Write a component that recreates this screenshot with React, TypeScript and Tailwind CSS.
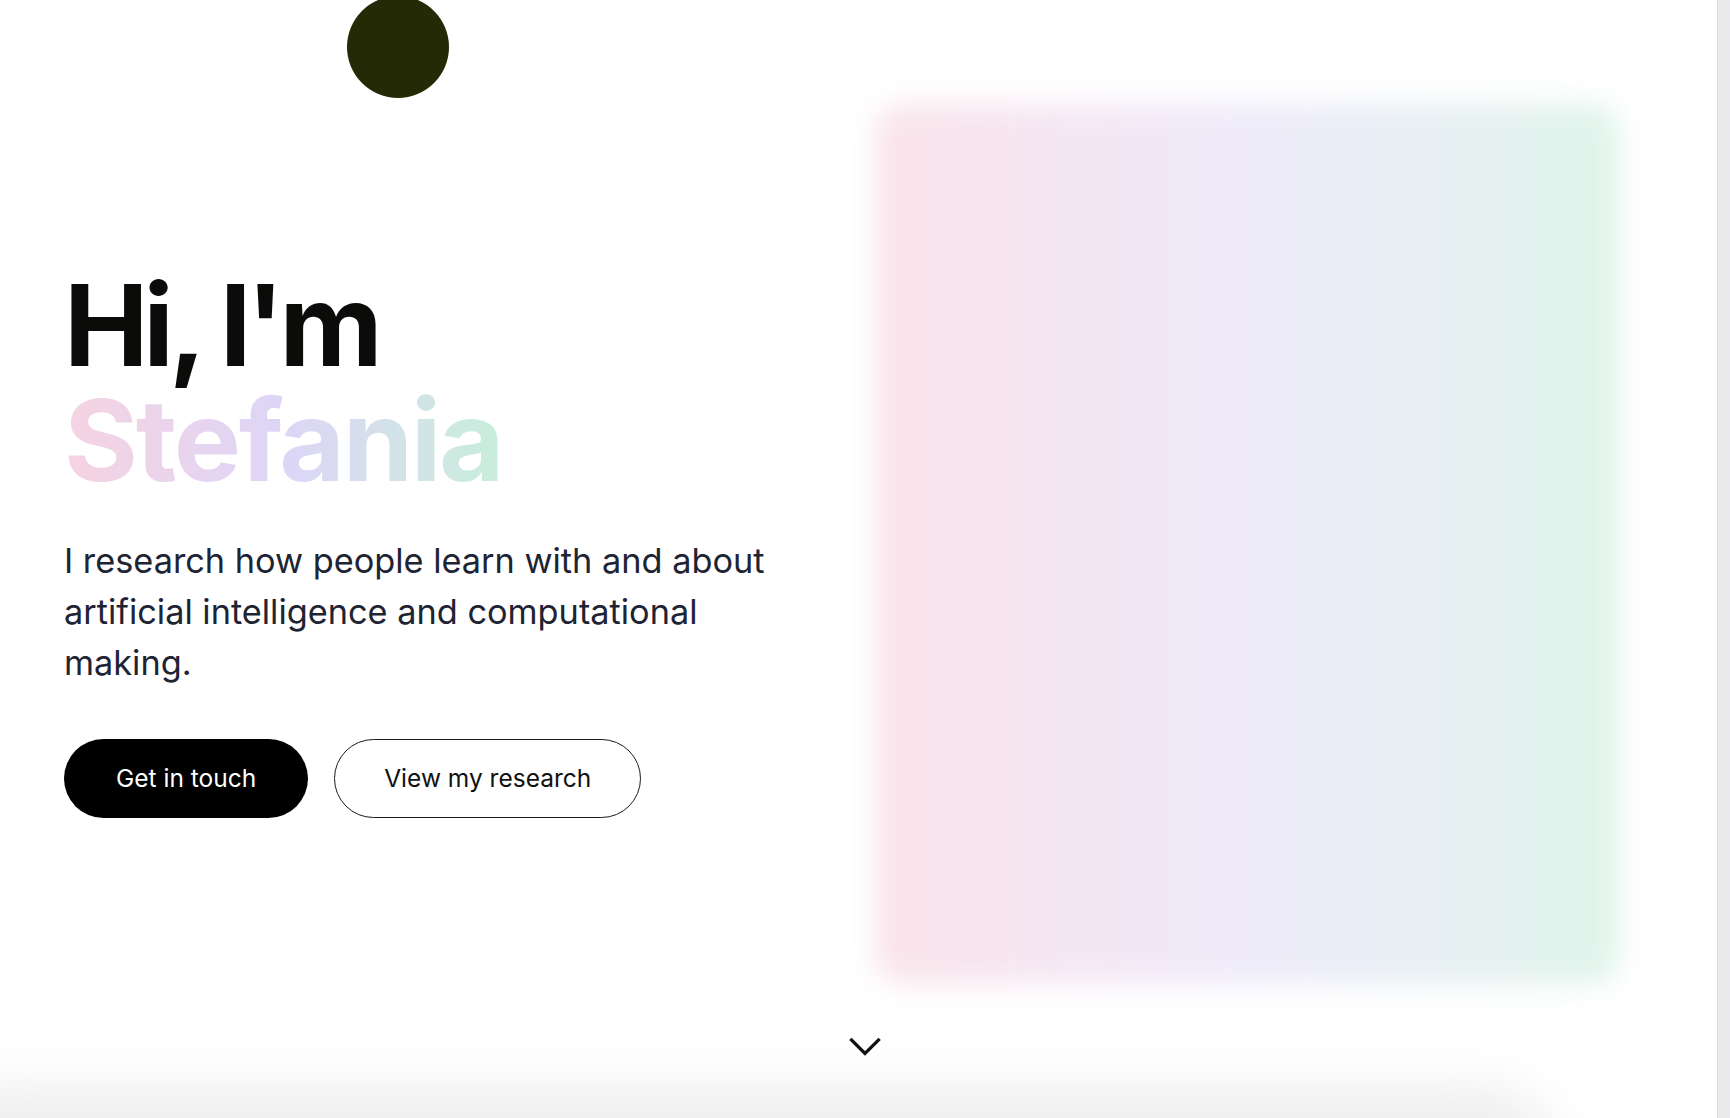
import React from "react";

function ChevronDown() {
  return (
    <svg width="32" height="18" viewBox="0 0 32 18" fill="none" aria-hidden="true">
      <polyline
        points="2.5,2 16,15.5 29.5,2"
        stroke="#111111"
        strokeWidth="3.2"
        strokeLinecap="square"
        strokeLinejoin="miter"
      />
    </svg>
  );
}

export default function App() {
  return (
    <div className="relative h-[1118px] w-full overflow-hidden bg-white font-['Inter','Liberation_Sans',sans-serif]">
      {/* decorative dark blob at the top */}
      <div className="absolute left-[347px] top-[-4px] h-[102px] w-[102px] rounded-full bg-[#242a05]" />

      {/* soft grey fade at the bottom (next section peeking) */}
      <div className="pointer-events-none absolute left-[-80px] top-[1085px] h-[160px] w-[1640px] rounded-[120px] bg-[#efefef] blur-xl" />

      <section className="relative flex h-full">
        <div className="w-[800px] shrink-0 pl-16 pt-[268px]">
          <h1 className="text-[113px] font-bold leading-[115px] tracking-[-0.02em] text-[#0b0b0a]">
            <span className="block tracking-[-0.045em]">Hi, I'm</span>
            <span className="inline-block bg-linear-to-r from-[#f6d3e1] via-[#ddd5f7] to-[#c8eedb] bg-clip-text text-transparent">
              Stefania
            </span>
          </h1>

          <p className="mt-[37px] max-w-[730px] text-[34.3px] leading-[51px] text-[#1e2433]">
            I research how people learn with and about artificial intelligence and computational making.
          </p>

          <div className="mt-[51px] flex gap-[26px]">
            <button className="flex h-[79px] items-center rounded-full bg-black px-[52px] text-[24.5px] text-white">
              Get in touch
            </button>
            <button className="flex h-[79px] items-center rounded-full border border-[#1a1a1a] bg-white px-[49px] text-[24.5px] text-[#111111]">
              View my research
            </button>
          </div>
        </div>

        <div className="flex-1 pl-[76px] pt-[104px]">
          <div className="h-[880px] w-[743px] rounded-[28px] bg-linear-to-r from-[#fae3ea] via-[#eeeafa] to-[#dff4ea] blur-[14px]" />
        </div>
      </section>

      {/* scroll indicator */}
      <div className="absolute left-1/2 top-[1038px] -translate-x-1/2">
        <ChevronDown />
      </div>

      {/* scrollbar track */}
      <div className="absolute right-0 top-0 h-full w-[13px] border-l border-[#dcdcde] bg-[#eaeaec]" />
    </div>
  );
}
